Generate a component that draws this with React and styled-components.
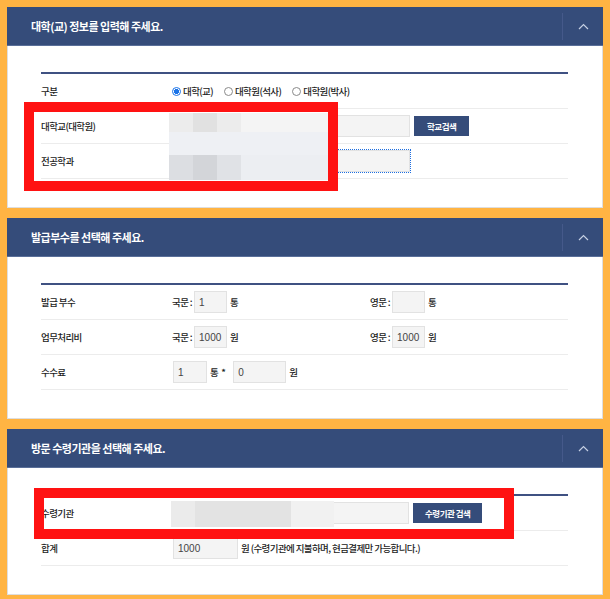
import React from "react";
import styled, { createGlobalStyle } from "styled-components";

const GlobalStyle = createGlobalStyle`
  body {
    margin: 0;
    background: #ffb443;
    font-family: "Noto Sans CJK KR", "Noto Sans", sans-serif;
    color: #222;
  }
`

const Page = styled.div`
  display: flex;
  flex-direction: column;
  gap: 10px;
  padding: 7px;
`

const Panel = styled.section`
  position: relative;
  background: #fff;
`

const Header = styled.div`
  display: flex;
  align-items: center;
  height: 38px;
  background: #354c7a;
  border-bottom: 1px solid #5a6f99;
`

const Title = styled.h2`
  margin: 0 0 0 24px;
  font-size: 11px;
  font-weight: 700;
  letter-spacing: -0.5px;
  color: #fff;
`

const Toggle = styled.div`
  margin-left: auto;
  width: 40px;
  height: 27px;
  border-left: 1px solid #45598a;
  display: flex;
  align-items: center;
  justify-content: center;
`

const Body = styled.div`
  border: 1px solid #dedede;
  border-top: none;
  padding: 26px 34px 28px 33px;
`

const Table = styled.div`
  border-top: 2px solid #3f5182;
`

const Row = styled.div`
  box-sizing: border-box;
  display: grid;
  grid-template-columns: 131px 1fr;
  align-items: center;
  height: 35px;
  border-bottom: 1px solid #ececec;
`

const Label = styled.div`
  font-size: 9.5px;
  font-weight: 500;
  letter-spacing: -0.6px;
  color: #222;
`

const Value = styled.div`
  display: flex;
  align-items: center;
  font-size: 9.5px;
  font-weight: 500;
  letter-spacing: -0.6px;
  color: #222;
`

const Half = styled.div`
  display: flex;
  align-items: center;
  width: 198px;
`

const RadioItem = styled.label`
  display: flex;
  align-items: center;
  gap: 2px;
  margin-right: 11px;
`

const RadioDot = styled.span`
  box-sizing: border-box;
  width: 9px;
  height: 9px;
  border-radius: 50%;
  border: 1px solid ${p => (p.$checked ? "#1a73e8" : "#8a8a8a")};
  background: ${p => (p.$checked ? "radial-gradient(circle, #1a73e8 0 2.4px, #fff 2.6px)" : "#fff")};
`

const Input = styled.input`
  box-sizing: border-box;
  width: ${p => p.$w}px;
  height: 22px;
  margin: 0 3px 0 ${p => (p.$ml === undefined ? 2 : p.$ml)}px;
  padding: 0 4px;
  border: 1px solid #e2e2e2;
  background: #f4f4f4;
  font-family: "Liberation Sans", Arial, sans-serif;
  font-size: 10px;
  letter-spacing: 0;
  color: #444;
  outline: ${p => (p.$focused ? "1px dotted #1f6fe0" : "none")};
  outline-offset: 0;
  &:focus {
    outline: 1px dotted #1f6fe0;
  }
`

const Button = styled.button`
  height: 20px;
  margin-left: 1px;
  padding: 0 ${p => p.$pad}px;
  border: none;
  background: #354c7a;
  color: #fff;
  font-family: "Noto Sans CJK KR", sans-serif;
  font-size: 8.5px;
  font-weight: 700;
  letter-spacing: -0.5px;
`

const Unit = styled.span`
  margin-right: ${p => p.$mr || 0}px;
`

const RedFrame = styled.div`
  position: absolute;
  left: ${p => p.$x}px;
  top: ${p => p.$y}px;
  width: ${p => p.$w}px;
  height: ${p => p.$h}px;
  box-sizing: border-box;
  border: 10px solid #ff1212;
  pointer-events: none;
`

const Mosaic = styled.div`
  position: absolute;
  left: ${p => p.$x}px;
  top: ${p => p.$y}px;
  width: ${p => p.$w}px;
  height: ${p => p.$h}px;
  display: grid;
  grid-template-columns: ${p => p.$cols};
  grid-template-rows: ${p => p.$rows};
`

const Cell = styled.div`
  background: ${p => p.$bg};
  grid-column: ${p => p.$span || "auto"};
`

const Chevron = () => (
  <svg width="11" height="7" viewBox="0 0 11 7">
    <polyline points="1,6 5.5,1.5 10,6" fill="none" stroke="#c6d0e4" strokeWidth="1.2" />
  </svg>
)

const PanelHead = ({ children }) => (
  <Header>
    <Title>{children}</Title>
    <Toggle>
      <Chevron />
    </Toggle>
  </Header>
)

const Radio = ({ checked, children }) => (
  <RadioItem>
    <RadioDot $checked={checked} />
    {children}
  </RadioItem>
)

const App = () => {
  return (
    <>
      <GlobalStyle />
      <Page>
        <Panel>
          <PanelHead>대학(교) 정보를 입력해 주세요.</PanelHead>
          <Body>
            <Table>
              <Row>
                <Label>구분</Label>
                <Value>
                  <Radio checked>대학(교)</Radio>
                  <Radio>대학원(석사)</Radio>
                  <Radio>대학원(박사)</Radio>
                </Value>
              </Row>
              <Row>
                <Label>대학교(대학원)</Label>
                <Value>
                  <Input $w={238} $ml={0} readOnly />
                  <Button $pad={13}>학교검색</Button>
                </Value>
              </Row>
              <Row>
                <Label>전공학과</Label>
                <Value>
                  <Input $w={238} $ml={0} $focused readOnly />
                </Value>
              </Row>
            </Table>
          </Body>
          <Mosaic $x={162} $y={106} $w={159} $h={67} $cols="24px 24px 24px 1fr" $rows="19px 23px 1fr">
            <Cell $bg="#ececec" />
            <Cell $bg="#e1e1e1" />
            <Cell $bg="#ececec" />
            <Cell $bg="#f4f4f4" />
            <Cell $bg="#eef0f4" $span="1 / -1" />
            <Cell $bg="#dcdee2" />
            <Cell $bg="#d3d5d9" />
            <Cell $bg="#e0e2e6" />
            <Cell $bg="#eceef2" />
          </Mosaic>
          <RedFrame $x={17} $y={95} $w={314} $h={89} />
        </Panel>

        <Panel>
          <PanelHead>발급부수를 선택해 주세요.</PanelHead>
          <Body>
            <Table>
              <Row>
                <Label>발급 부수</Label>
                <Value>
                  <Half>
                    국문 :<Input $w={33} defaultValue="1" readOnly />통
                  </Half>
                  <Half>
                    영문 :<Input $w={33} readOnly />통
                  </Half>
                </Value>
              </Row>
              <Row>
                <Label>업무처리비</Label>
                <Value>
                  <Half>
                    국문 :<Input $w={33} defaultValue="1000" readOnly />원
                  </Half>
                  <Half>
                    영문 :<Input $w={33} defaultValue="1000" readOnly />원
                  </Half>
                </Value>
              </Row>
              <Row>
                <Label>수수료</Label>
                <Value>
                  <Input $w={34} $ml={1} defaultValue="1" readOnly />
                  <Unit $mr={6}>통 &nbsp;*</Unit>
                  <Input $w={53} defaultValue="0" readOnly />원
                </Value>
              </Row>
            </Table>
          </Body>
        </Panel>

        <Panel>
          <PanelHead>방문 수령기관을 선택해 주세요.</PanelHead>
          <Body>
            <Table>
              <Row>
                <Label>수령기관</Label>
                <Value>
                  <Input $w={237} $ml={0} readOnly />
                  <Button $pad={12}>수령기관 검색</Button>
                </Value>
              </Row>
              <Row>
                <Label>합계</Label>
                <Value>
                  <Input $w={65} $ml={1} defaultValue="1000" readOnly />
                  원 (수령기관에 지불하며, 현금결제만 가능합니다.)
                </Value>
              </Row>
            </Table>
          </Body>
          <Mosaic $x={164} $y={72} $w={163} $h={26} $cols="24px 96px 1fr" $rows="1fr">
            <Cell $bg="#ebebeb" />
            <Cell $bg="#e3e3e3" />
            <Cell $bg="#f1f1f1" />
          </Mosaic>
          <RedFrame $x={27} $y={59} $w={480} $h={51} />
        </Panel>
      </Page>
    </>
  )
}

export default App
